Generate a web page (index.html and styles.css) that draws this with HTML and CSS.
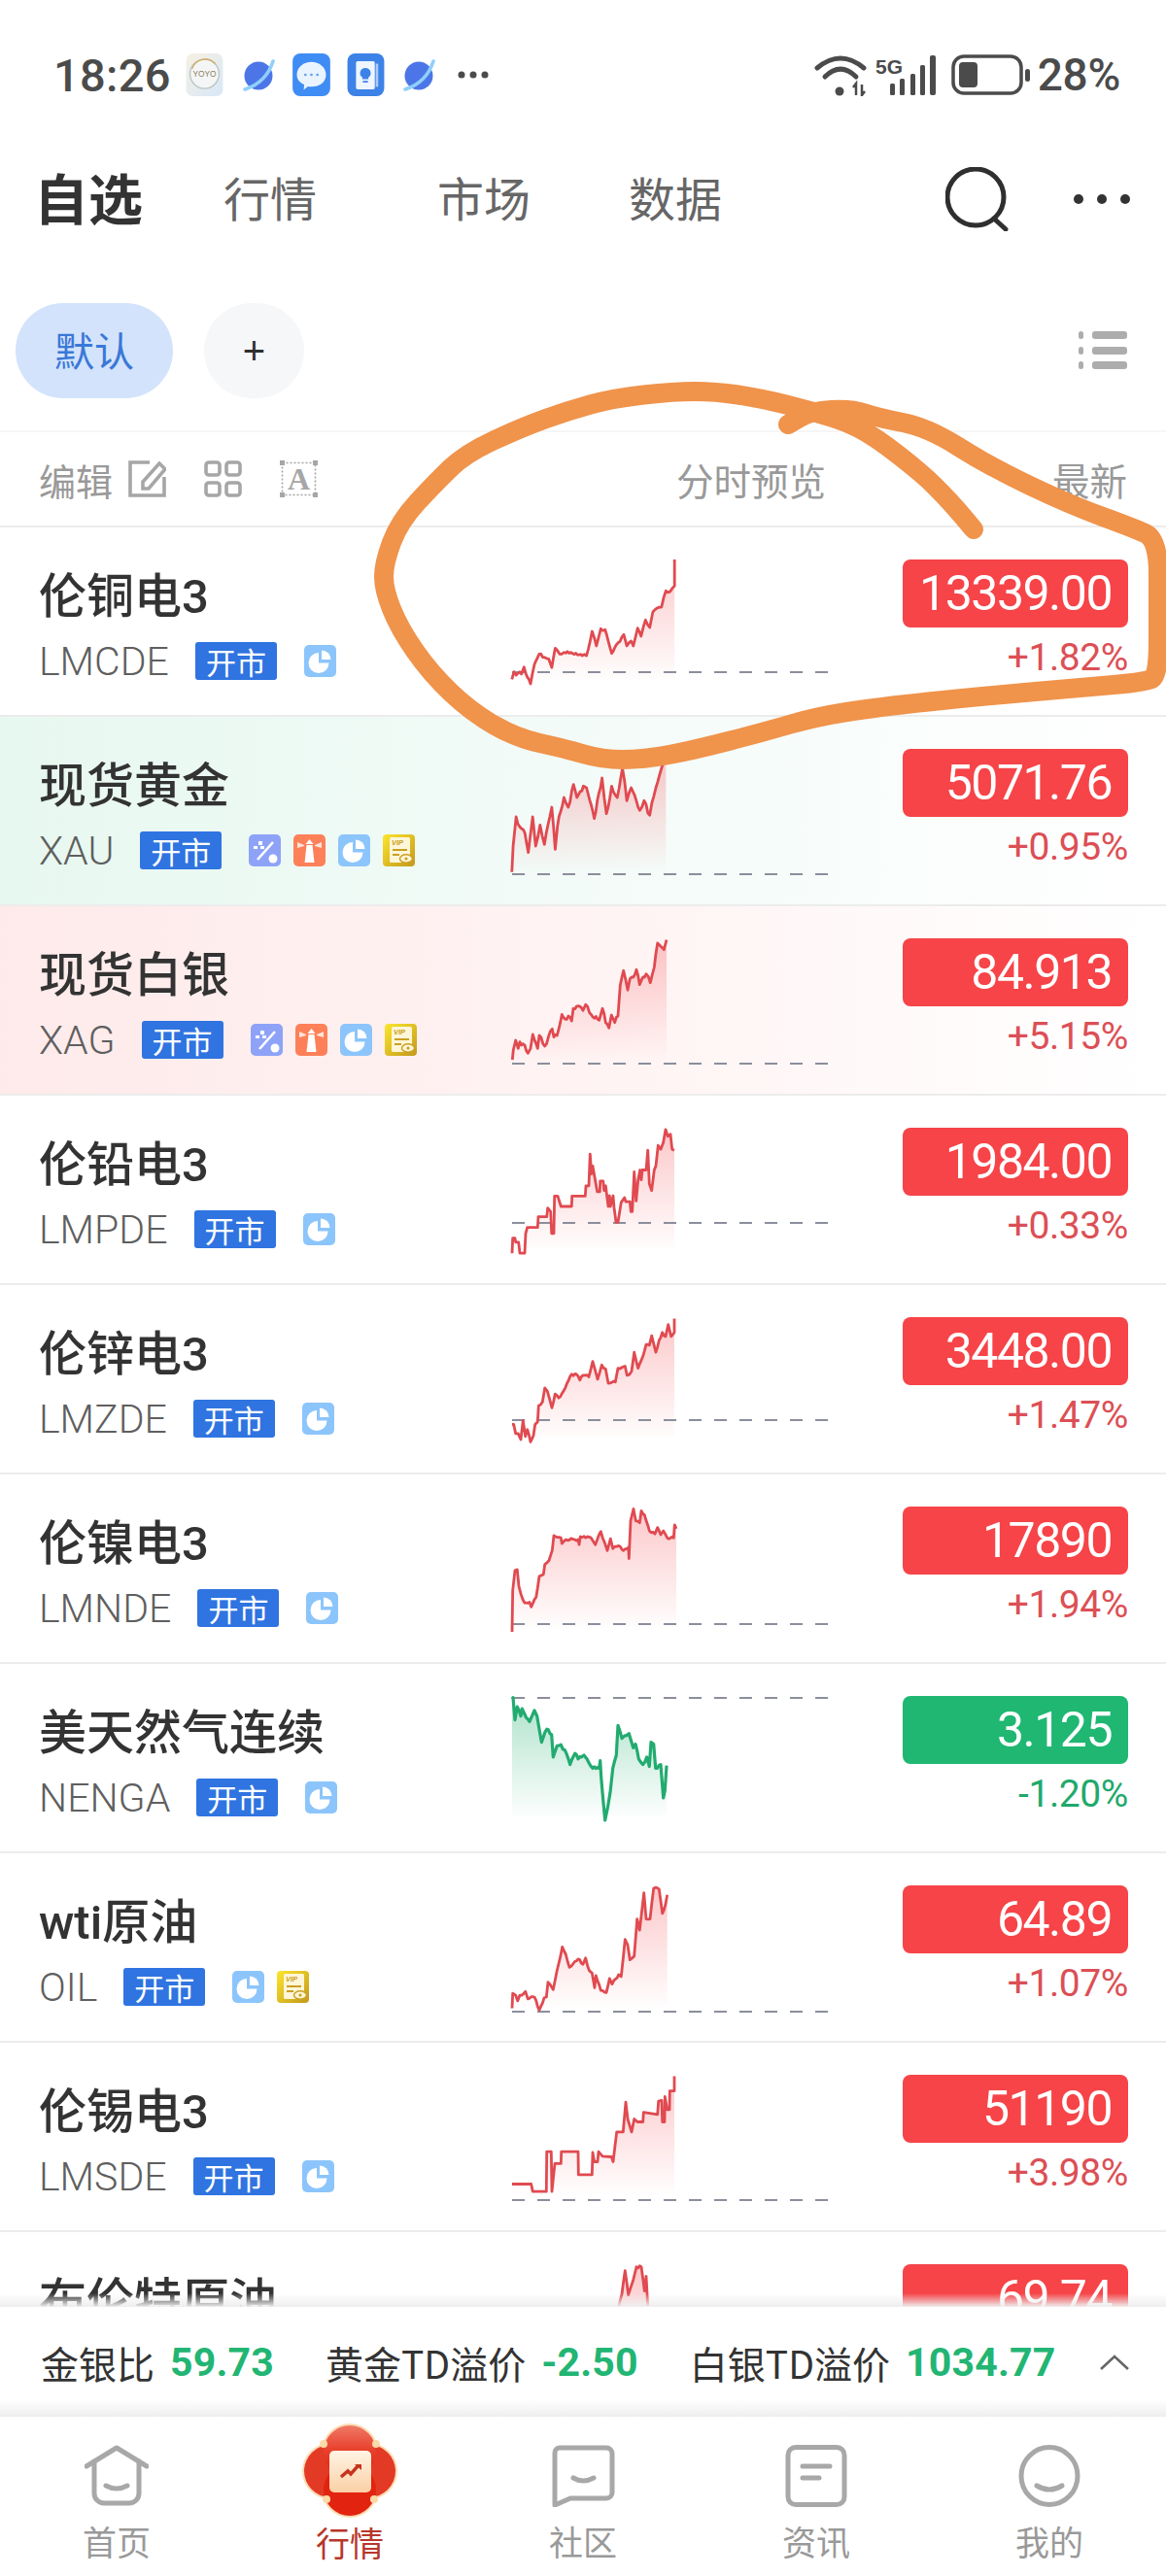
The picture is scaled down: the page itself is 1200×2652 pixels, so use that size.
FILE: index.html
```html
<!DOCTYPE html>
<html lang="zh-CN">
<head>
<meta charset="utf-8">
<title>自选</title>
<link rel="stylesheet" href="styles.css">
</head>
<body>
<svg class="defs" width="0" height="0" aria-hidden="true">
  <defs>
    <linearGradient id="areaUp" x1="0" y1="0" x2="0" y2="1"><stop offset="0" stop-color="#f4474c" stop-opacity=".3"/><stop offset="1" stop-color="#f4474c" stop-opacity="0"/></linearGradient>
    <linearGradient id="areaDown" x1="0" y1="0" x2="0" y2="1"><stop offset="0" stop-color="#1fae6e" stop-opacity=".36"/><stop offset="1" stop-color="#1fae6e" stop-opacity="0"/></linearGradient>
    <linearGradient id="vipGold" x1="0" y1="0" x2="1" y2="1"><stop offset="0" stop-color="#fbe62c"/><stop offset="1" stop-color="#c4981c"/></linearGradient>
    <linearGradient id="cardCream" x1="0" y1="0" x2="0" y2="1"><stop offset="0" stop-color="#fff4e4"/><stop offset="1" stop-color="#fbd0a6"/></linearGradient>
    <linearGradient id="lobeRed" x1="0" y1="0" x2="0" y2="1"><stop offset="0" stop-color="#ef7a66"/><stop offset=".45" stop-color="#e8422e"/><stop offset="1" stop-color="#e0200c"/></linearGradient>
    <linearGradient id="yoyoBg" x1="0" y1="0" x2="1" y2="1"><stop offset="0" stop-color="#f7f0e2"/><stop offset="1" stop-color="#d7e8f8"/></linearGradient>
    <symbol id="iPie" viewBox="0 0 33 33"><rect width="33" height="33" rx="5" fill="#8cc5fb"/><path d="M15 8a10.500 10.500 0 1 0 10.500 10.500H15Z" fill="#fff"/><path d="M18 5.500a9.500 9.500 0 0 1 9.500 9.500H18Z" fill="#fff"/></symbol>
    <symbol id="iPct" viewBox="0 0 33 33"><rect width="33" height="33" rx="5" fill="#8ea3f8"/><path d="M9 26 25 8" stroke="#fff" stroke-width="2.600" fill="none"/><circle cx="25" cy="25" r="4.500" fill="#fff"/><path d="M10 7h4v4h-4ZM5 12h4v3H5ZM12 12h4v3h-4Z" fill="#fff"/></symbol>
    <symbol id="iTower" viewBox="0 0 33 33"><rect width="33" height="33" rx="5" fill="#fd8059"/><path d="M16.500 5l4 5h-8ZM13.500 11h6l2 18h-10Z" fill="#fff"/><path d="M4 8l7 3v1l-7 2ZM29 8l-7 3v1l7 2Z" fill="#ffe3d8"/></symbol>
    <symbol id="iVip" viewBox="0 0 33 33"><rect width="33" height="33" rx="4" fill="url(#vipGold)"/><rect x="7" y="3" width="21" height="26" rx="1.500" fill="#fff6d8"/><text x="9" y="11" class="vip-text">VIP</text><path d="M10 16h15M10 21h7" stroke="#c9a021" stroke-width="1.800"/><ellipse cx="24" cy="25" rx="6.500" ry="4.200" fill="#fff6d8" stroke="#c9a021" stroke-width="1.500"/><circle cx="24" cy="25" r="1.600" fill="#c9a021"/></symbol>
    <symbol id="iPlanet" viewBox="0 0 33 33"><circle cx="16" cy="17" r="14.500" fill="#4c76e8"/><path d="M2 31Q24 24 31 2" fill="none" stroke="#8fd0fb" stroke-width="3.600" stroke-linecap="round"/></symbol>
  </defs>
</svg>

<header class="status">
  <span class="status-time">18:26</span>
  <span class="app-icons">
    <svg class="app yoyo" viewBox="0 0 43 50"><rect width="43" height="50" rx="8" fill="url(#yoyoBg)"/><circle cx="21.500" cy="24" r="17" fill="#f4f6f5" stroke="#b9c4c6" stroke-width="1.500"/><path d="M7 18A16 16 0 0 1 34 12" stroke="#d2ab63" stroke-width="1.500" fill="none"/><text x="21.500" y="27" class="yoyo-text">YOYO</text></svg>
    <svg class="planet" viewBox="0 0 33 33"><use href="#iPlanet"/></svg>
    <svg class="app chat" viewBox="0 0 44 50"><rect width="44" height="50" rx="9" fill="#3f8cf5"/><path d="M22 10c9 0 17 6 17 15s-8 14-17 14c-1 0-3 0-4-.500l-5 4 .500-6C8 34 5 30 5 25c0-9 8-15 17-15Z" fill="#eaf4ff"/><circle cx="15" cy="25" r="1.500" fill="#5b9df2"/><circle cx="22" cy="25" r="1.500" fill="#5b9df2"/><circle cx="29" cy="25" r="1.500" fill="#5b9df2"/></svg>
    <svg class="app note" viewBox="0 0 43 50"><rect width="43" height="50" rx="9" fill="#3d82e6"/><rect x="10" y="9" width="22" height="33" rx="2" fill="#eef5ff"/><rect x="33" y="12" width="3" height="27" fill="#a9ccf6"/><path d="M21 17a6 6 0 0 1 3.500 11v2h-7v-2A6 6 0 0 1 21 17ZM18 32h6v2h-6Z" fill="#3d82e6"/></svg>
    <svg class="planet" viewBox="0 0 33 33"><use href="#iPlanet"/></svg>
    <svg class="more-small" viewBox="0 0 32 8"><circle cx="4" cy="4" r="3.500"/><circle cx="16" cy="4" r="3.500"/><circle cx="28" cy="4" r="3.500"/></svg>
  </span>
  <span class="status-right">
    <svg class="wifi" viewBox="0 0 54 44"><path d="M3 15Q27-5 51 15" /><path d="M11 24Q27 8 43 24"/><circle cx="26" cy="39" r="4.500"/><path d="M43 43V31l-3 4M49 32v11l3-4" class="thin"/></svg>
    <svg class="signal" viewBox="0 0 65 42"><text x="1" y="20" textLength="28" lengthAdjust="spacingAndGlyphs" class="signal-text">5G</text><rect x="16" y="30" width="5" height="12" rx="1.500"/><rect x="26" y="25" width="5" height="17" rx="1.500"/><rect x="37" y="20" width="5" height="22" rx="1.500"/><rect x="47" y="11" width="5" height="31" rx="1.500"/><rect x="57" y="1" width="6" height="41" rx="2"/></svg>
    <svg class="battery" viewBox="0 0 81 42"><rect x="2" y="2" width="70" height="38" rx="11" class="batt-shell"/><rect x="8" y="8" width="19" height="26" rx="4"/><rect x="76" y="15" width="5" height="13" rx="2.500"/></svg>
    <span class="status-pct">28%</span>
  </span>
</header>

<nav class="nav">
  <a class="nav-tab nav-active">自选</a>
  <a class="nav-tab nav-market">行情</a>
  <a class="nav-tab nav-place">市场</a>
  <a class="nav-tab nav-data">数据</a>
  <span class="nav-actions">
    <svg class="search" viewBox="0 0 66 66"><circle cx="31" cy="31" r="29"/><path d="M50 53l12 11"/></svg>
    <svg class="more" viewBox="0 0 58 12"><circle cx="5" cy="6" r="5"/><circle cx="29" cy="6" r="5"/><circle cx="53" cy="6" r="5"/></svg>
  </span>
</nav>

<section class="groups">
  <button class="pill pill-on">默认</button>
  <button class="pill pill-add">+</button>
  <svg class="list-icon" viewBox="0 0 50 40"><rect x="0" y="1" width="5" height="8" rx="2.500"/><rect x="14" y="1" width="36" height="8" rx="3"/><rect x="0" y="17" width="5" height="8" rx="2.500"/><rect x="14" y="17" width="36" height="8" rx="3"/><rect x="0" y="32" width="5" height="8" rx="2.500"/><rect x="14" y="32" width="36" height="8" rx="3"/></svg>
</section>

<section class="toolbar">
  <div class="tool-left">
    <span>编辑</span>
    <svg class="tool-icon edit" viewBox="0 0 39 38"><path d="M22 2H2v34h35V17"/><path d="M15 29v-7L32 3l6 6-17 20Z"/></svg>
    <svg class="tool-icon" viewBox="0 0 39 38"><rect x="2" y="2" width="14" height="13" rx="3"/><rect x="23" y="2" width="14" height="13" rx="3"/><rect x="2" y="23" width="14" height="13" rx="3"/><rect x="23" y="23" width="14" height="13" rx="3"/></svg>
    <svg class="tool-icon font-box" viewBox="0 0 39 38"><rect x="2.500" y="2.500" width="34" height="33" class="dots"/><path d="M0 0h5v5H0ZM34 0h5v5h-5ZM0 33h5v5H0ZM34 33h5v5h-5Z" class="solid"/><text x="19.500" y="30" class="font-a">A</text></svg>
  </div>
  <span class="tool-mid">分时预览</span>
  <span class="tool-right">最新</span>
</section>

<main class="list">
  <article class="row">
    <div class="info"><h3 class="name">伦铜电3</h3><div class="meta"><span class="code">LMCDE</span><span class="badge">开市</span><svg class="tag"><use href="#iPie"/></svg></div></div>
    <svg class="spark" viewBox="0 0 325 195" data-chart="cu"></svg>
    <div class="quote"><div class="price">13339.00</div><div class="pct">+1.82%</div></div>
  </article>
  <article class="row row-green">
    <div class="info"><h3 class="name">现货黄金</h3><div class="meta"><span class="code">XAU</span><span class="badge">开市</span><svg class="tag"><use href="#iPct"/></svg><svg class="tag"><use href="#iTower"/></svg><svg class="tag"><use href="#iPie"/></svg><svg class="tag"><use href="#iVip"/></svg></div></div>
    <svg class="spark" viewBox="0 0 325 195" data-chart="au"></svg>
    <div class="quote"><div class="price">5071.76</div><div class="pct">+0.95%</div></div>
  </article>
  <article class="row row-red">
    <div class="info"><h3 class="name">现货白银</h3><div class="meta"><span class="code">XAG</span><span class="badge">开市</span><svg class="tag"><use href="#iPct"/></svg><svg class="tag"><use href="#iTower"/></svg><svg class="tag"><use href="#iPie"/></svg><svg class="tag"><use href="#iVip"/></svg></div></div>
    <svg class="spark" viewBox="0 0 325 195" data-chart="ag"></svg>
    <div class="quote"><div class="price">84.913</div><div class="pct">+5.15%</div></div>
  </article>
  <article class="row">
    <div class="info"><h3 class="name">伦铅电3</h3><div class="meta"><span class="code">LMPDE</span><span class="badge">开市</span><svg class="tag"><use href="#iPie"/></svg></div></div>
    <svg class="spark" viewBox="0 0 325 195" data-chart="pb"></svg>
    <div class="quote"><div class="price">1984.00</div><div class="pct">+0.33%</div></div>
  </article>
  <article class="row">
    <div class="info"><h3 class="name">伦锌电3</h3><div class="meta"><span class="code">LMZDE</span><span class="badge">开市</span><svg class="tag"><use href="#iPie"/></svg></div></div>
    <svg class="spark" viewBox="0 0 325 195" data-chart="zn"></svg>
    <div class="quote"><div class="price">3448.00</div><div class="pct">+1.47%</div></div>
  </article>
  <article class="row">
    <div class="info"><h3 class="name">伦镍电3</h3><div class="meta"><span class="code">LMNDE</span><span class="badge">开市</span><svg class="tag"><use href="#iPie"/></svg></div></div>
    <svg class="spark" viewBox="0 0 325 195" data-chart="ni"></svg>
    <div class="quote"><div class="price">17890</div><div class="pct">+1.94%</div></div>
  </article>
  <article class="row">
    <div class="info"><h3 class="name">美天然气连续</h3><div class="meta"><span class="code">NENGA</span><span class="badge">开市</span><svg class="tag"><use href="#iPie"/></svg></div></div>
    <svg class="spark" viewBox="0 0 325 195" data-chart="gas"></svg>
    <div class="quote"><div class="price price-down">3.125</div><div class="pct pct-down">-1.20%</div></div>
  </article>
  <article class="row">
    <div class="info"><h3 class="name">wti原油</h3><div class="meta"><span class="code">OIL</span><span class="badge">开市</span><svg class="tag"><use href="#iPie"/></svg><svg class="tag"><use href="#iVip"/></svg></div></div>
    <svg class="spark" viewBox="0 0 325 195" data-chart="oil"></svg>
    <div class="quote"><div class="price">64.89</div><div class="pct">+1.07%</div></div>
  </article>
  <article class="row">
    <div class="info"><h3 class="name">伦锡电3</h3><div class="meta"><span class="code">LMSDE</span><span class="badge">开市</span><svg class="tag"><use href="#iPie"/></svg></div></div>
    <svg class="spark" viewBox="0 0 325 195" data-chart="sn"></svg>
    <div class="quote"><div class="price">51190</div><div class="pct">+3.98%</div></div>
  </article>
  <article class="row">
    <div class="info"><h3 class="name">布伦特原油</h3></div>
    <svg class="spark" viewBox="0 0 325 195" data-chart="brent"></svg>
    <div class="quote"><div class="price">69.74</div></div>
  </article>
</main>

<section class="stats">
  <div class="stat"><span>金银比</span><b>59.73</b></div>
  <div class="stat"><span>黄金TD溢价</span><b>-2.50</b></div>
  <div class="stat"><span>白银TD溢价</span><b>1034.77</b></div>
  <svg class="caret" viewBox="0 0 30 16"><path d="M1 15 15 2l14 13"/></svg>
</section>

<footer class="tabbar">
  <a class="tab">
    <svg class="tab-icon" viewBox="0 0 66 64"><path d="M2 22 33 3l31 19"/><path d="M10 17v33a10 10 0 0 0 10 10h26a10 10 0 0 0 10-10V17"/><path d="M22 42q11 6 22 0"/></svg>
    <span>首页</span>
  </a>
  <a class="tab tab-on">
    <svg class="festive" viewBox="0 0 96 96">
      <circle cx="48" cy="28" r="29" fill="#fcdcb4"/><circle cx="28" cy="48" r="29" fill="#fcdcb4"/><circle cx="68" cy="48" r="29" fill="#fcdcb4"/><circle cx="48" cy="67" r="29" fill="#fcdcb4"/>
      <circle cx="28" cy="48" r="27" fill="#e33a26"/><circle cx="68" cy="48" r="27" fill="#e33a26"/><circle cx="48" cy="28" r="27" fill="url(#lobeRed)"/><circle cx="48" cy="67" r="27" fill="#e2230f"/>
      <circle cx="21" cy="20" r="4" fill="#fbd9a8"/><circle cx="75" cy="20" r="4" fill="#fbd9a8"/><circle cx="24" cy="77" r="4" fill="#fbd9a8"/><circle cx="73" cy="77" r="4" fill="#fbd9a8"/>
      <rect x="27" y="27" width="43" height="43" rx="5" fill="url(#cardCream)"/>
      <path d="M39 54l7-6 3 3 8-9" fill="none" stroke="#c8321f" stroke-width="3.500"/><path d="M53 41h7v6Z" fill="#c8321f"/>
    </svg>
    <span>行情</span>
  </a>
  <a class="tab">
    <svg class="tab-icon" viewBox="0 0 66 64"><path d="M9 3h48a6 6 0 0 1 6 6v40a6 6 0 0 1-6 6H20L4 62V8a5 5 0 0 1 5-5Z"/><path d="M23 34q10 6 21 0"/></svg>
    <span>社区</span>
  </a>
  <a class="tab">
    <svg class="tab-icon" viewBox="0 0 66 64"><rect x="4" y="2.500" width="58" height="59" rx="8"/><path d="M19 22h28M19 34h17"/></svg>
    <span>资讯</span>
  </a>
  <a class="tab">
    <svg class="tab-icon" viewBox="0 0 66 64"><ellipse cx="33" cy="32" rx="29" ry="29.500"/><path d="M20 42q13 8 26 0"/></svg>
    <span>我的</span>
  </a>
</footer>

<svg class="scribble" viewBox="0 0 1200 2652" aria-hidden="true"><path id="scribblePath"/></svg>
<script src="chart.js"></script>
</body>
</html>
```
FILE: styles.css
```css
* { box-sizing: border-box; margin: 0; padding: 0; }
html, body { width: 1200px; height: 2652px; overflow: hidden; background: #fff; }
body {
  position: relative;
  display: flex;
  flex-direction: column;
  font-family: Roboto, "Noto Sans CJK SC", sans-serif;
  color: #333;
}
.defs { position: absolute; }
.vip-text { font: italic 700 7.5px "Liberation Sans", sans-serif; fill: #c9a021; }
.yoyo-text { font: 400 9.5px "Liberation Sans", sans-serif; fill: #8a7f5f; text-anchor: middle; }

/* status bar */
.status { height: 154px; flex: none; display: flex; align-items: center; padding: 0 47px 0 55px; color: #4b4b4b; }
.status-time { font-size: 47px; font-weight: 500; letter-spacing: .3px; width: 134px; line-height: 1; }
.app-icons { display: flex; align-items: center; }
.app { width: 43px; height: 44px; }
.yoyo { margin-right: 18px; }
.planet { width: 33px; height: 33px; margin-right: 16px; }
.chat { margin-right: 13px; }
.note { margin-right: 17px; }
.more-small { width: 32px; height: 8px; margin-left: 7px; fill: #4b4b4b; }
.status-right { margin-left: auto; display: flex; align-items: center; }
.wifi { width: 54px; height: 44px; margin-right: 8px; }
.wifi path { fill: none; stroke: #4b4b4b; stroke-width: 5; stroke-linecap: round; }
.wifi path.thin { stroke-width: 2.5; stroke-linecap: butt; }
.wifi circle { fill: #4b4b4b; }
.signal { width: 65px; height: 42px; margin-right: 14px; fill: #4b4b4b; }
.signal-text { font: 700 21px "Liberation Sans", sans-serif; }
.battery { width: 81px; height: 42px; margin-right: 8px; fill: #4b4b4b; }
.batt-shell { fill: none; stroke: #4b4b4b; stroke-width: 3.5; }
.status-pct { font-size: 46px; font-weight: 500; line-height: 1; letter-spacing: -.3px; }

/* top navigation */
.nav { height: 102px; flex: none; display: flex; align-items: center; padding-left: 35px; }
.nav-tab { font-family: "Noto Sans CJK SC", sans-serif; font-size: 48px; line-height: 1; color: #666; margin-bottom: 6px; }
.nav-active { font-size: 56px; font-weight: 700; color: #333; }
.nav-market { margin-left: 83px; }
.nav-place { margin-left: 124px; }
.nav-data { margin-left: 101px; }
.nav-actions { margin-left: auto; display: flex; align-items: center; padding-right: 37px; }
.search { width: 66px; height: 66px; margin-right: 66px; }
.search circle, .search path { fill: none; stroke: #2f2f2f; stroke-width: 5; stroke-linecap: round; }
.more { width: 58px; height: 12px; fill: #333; }

/* group pills */
.groups { height: 187px; flex: none; display: flex; align-items: flex-start; padding: 56px 40px 0 16px; }
.pill { height: 98px; border: 0; border-radius: 49px; font-family: "Noto Sans CJK SC", sans-serif; }
.pill-on { width: 162px; background: #d3e3fb; color: #3a78d8; font-size: 41px; padding-bottom: 4px; }
.pill-add { width: 103px; margin-left: 32px; background: #f6f7f9; color: #2f2f2f; font-size: 40px; font-family: "Liberation Sans", sans-serif; }
.list-icon { width: 50px; height: 40px; margin: 28px 0 0 auto; fill: #adadad; }

/* list toolbar */
.toolbar { height: 100px; flex: none; display: flex; align-items: center; padding: 0 40px 0 40px; border-top: 2px solid #f6f6f6; border-bottom: 2px solid #ececec; color: #999; font-family: "Noto Sans CJK SC", sans-serif; font-size: 38.5px; }
.tool-left { display: flex; align-items: center; width: 656px; font-size: 38px; }
.tool-icon { width: 39px; height: 38px; margin-left: 39px; }
.tool-icon.edit { margin-left: 16px; }
.tool-icon rect, .tool-icon path { fill: none; stroke: #a6a6a6; stroke-width: 3.6; }
.tool-icon .dots { stroke-width: 1.6; stroke-dasharray: 2 2; }
.tool-icon .solid { fill: #a6a6a6; stroke: none; }
.font-a { font: 700 32px "Liberation Serif", serif; fill: #a6a6a6; text-anchor: middle; }
.tool-right { margin-left: auto; }

/* quote rows */
.list { flex: 1; min-height: 0; overflow: hidden; }
.row { height: 195px; display: grid; grid-template-columns: 487px 325px 1fr; padding-left: 40px; border-bottom: 2px solid #ececec; background: #fff; }
.row-green { background: linear-gradient(90deg, #e7f8f0 0%, #f3fbf8 50%, #fff 100%); }
.row-red { background: linear-gradient(90deg, #feeaea 0%, #fff3f3 50%, #fff 100%); }
.info { padding-top: 44px; }
.name { font-family: Roboto, "Noto Sans CJK SC", sans-serif; font-size: 49px; font-weight: 500; line-height: 56px; color: #333; }
.meta { display: flex; align-items: center; height: 40px; margin-top: 17px; }
.code { font-size: 41px; font-weight: 300; line-height: 40px; color: #5f5f5f; margin-right: 27px; margin-top: 2px; }
.badge { width: 84px; height: 39px; background: #2f74e0; border-radius: 3px; color: #fff; font-family: "Noto Sans CJK SC", sans-serif; font-size: 31px; line-height: 39px; text-align: center; margin-right: 15px; }
.tag { width: 33px; height: 33px; margin-left: 13px; }
.spark { width: 325px; height: 195px; overflow: visible; }
.spark-line { fill: none; stroke: #e04a50; stroke-width: 2.8; stroke-linejoin: round; }
.spark-line.down { stroke: #22ab70; stroke-width: 3.2; }
.spark-area { fill: url(#areaUp); }
.spark-area.down { fill: url(#areaDown); }
.spark-base { stroke: #8b8e9c; stroke-width: 2; stroke-dasharray: 13 13; }
.quote { padding: 33px 39px 0 0; text-align: right; }
.price { width: 232px; height: 70px; margin-left: auto; background: #f64448; border-radius: 8px; color: #fff; font-size: 50px; line-height: 70px; letter-spacing: -1.5px; padding-right: 17px; }
.price-down { background: #1fb772; }
.pct { margin-top: 9px; font-size: 39px; line-height: 44px; color: #dc4f55; letter-spacing: -.4px; }
.pct-down { color: #1fa96c; }

/* stats strip */
.stats { position: relative; height: 113px; flex: none; display: flex; align-items: center; padding: 0 38px 0 42px; background: linear-gradient(180deg, #fff 84%, #eee 100%); font-family: "Noto Sans CJK SC", sans-serif; font-size: 39px; color: #333; }
.stats::before { content: ""; position: absolute; left: 0; right: 0; top: -14px; height: 14px; background: linear-gradient(180deg, rgba(238,238,238,0), #eee); }
.stat { display: flex; align-items: center; gap: 16px; margin-right: 53px; white-space: nowrap; }
.stat:last-of-type { margin-right: 0; }
.stat b { font-family: Roboto, sans-serif; font-weight: 700; font-size: 41px; letter-spacing: .2px; color: #22b573; }
.caret { width: 30px; height: 16px; flex: none; margin-left: auto; }
.caret path { fill: none; stroke: #666; stroke-width: 2.6; }

/* bottom tabs */
.tabbar { height: 164px; flex: none; display: grid; grid-template-columns: repeat(5, 240px); background: #fff; }
.tab { display: flex; flex-direction: column; align-items: center; font-family: "Noto Sans CJK SC", sans-serif; font-size: 35px; line-height: 40px; color: #999; padding-top: 29px; }
.tab span { margin-top: 15px; }
.tab-icon { width: 66px; height: 64px; }
.tab-icon path, .tab-icon rect, .tab-icon ellipse { fill: none; stroke: #a8a8a8; stroke-width: 5; stroke-linecap: round; stroke-linejoin: round; }
.tab-on { color: #b8362a; padding-top: 8px; }
.tab-on span { margin-top: 5px; }
.festive { width: 96px; height: 96px; overflow: visible; }

/* hand-drawn annotation over the screenshot */
.scribble { position: absolute; left: 0; top: 0; width: 1200px; height: 2652px; pointer-events: none; }
.scribble path { fill: none; stroke: #f0934b; stroke-width: 20; stroke-linecap: round; stroke-linejoin: round; }
```
FILE: chart.js
```js
// Sparkline data, traced in source-space units and mapped into each row's 325x195 box.
var rowTop = { cu: 543, au: 737, ag: 932, pb: 1127, zn: 1322, ni: 1517, gas: 1712, oil: 1907, sn: 2103, brent: 2297 };
var spaces = {
  a: function (x, y, t) { return [x / 2.24 - 27, y / 3 + 540 - t]; },
  b: function (x, y, t) { return [x / 3 - 17, y / 3 + 950 - t]; },
  c: function (x, y, t) { return [(x - 81) / 3, y / 2.45 + 1130 - t]; },
  d: function (x, y, t) { return [(x - 81) / 3, y / 2.61 + 1760 - t]; }
};
var charts = {
  cu: { s: 'a', base: 149, j: 1, p: [60,478,65,455,70,465,78,455,82,462,88,440,92,460,103,492,112,432,123,400,135,410,145,415,152,442,160,382,170,400,180,395,200,398,222,405,232,405,245,330,255,375,265,322,275,325,290,398,305,365,318,340,325,375,335,360,340,375,350,320,358,345,368,295,378,318,385,270,395,258,405,255,415,205,425,207,435,190,435,108] },
  au: { s: 'a', base: 162, j: 2, p: [60,1070,63,990,70,900,78,930,90,950,98,1010,108,900,115,990,125,925,135,985,152,870,160,1000,165,930,180,840,190,870,202,800,210,840,225,805,232,810,250,905,268,780,278,890,290,805,303,840,315,750,325,850,335,810,355,880,365,850,378,895,392,810,405,750,415,720] },
  ag: { s: 'b', base: 162, j: 1.5, p: [52,420,55,390,62,360,70,385,75,365,90,375,100,400,108,385,115,342,130,385,135,345,152,378,175,325,180,350,190,345,205,280,215,295,225,285,235,300,240,262,250,255,270,268,278,250,290,275,315,295,320,298,330,262,340,305,350,322,358,282,368,305,378,285,385,190,395,145,408,205,415,170,425,165,435,142,445,188,465,155,478,182,490,135,500,60,510,70,520,80,528,50] },
  pb: { s: 'c', base: 131, j: 0, p: [81,390,83,352,90,352,92,362,101,362,105,390,120,390,123,340,128,325,160,325,162,298,188,298,191,276,200,285,203,340,210,340,212,246,222,246,232,272,265,272,266,246,307,246,309,220,318,220,322,140,326,190,330,170,344,235,352,235,353,208,362,208,365,232,370,220,378,272,382,245,385,272,393,245,396,275,402,312,408,312,418,262,428,250,432,260,445,260,448,285,452,285,458,185,464,258,470,205,476,180,480,205,483,180,495,180,500,130,505,215,512,232,520,180,525,170,532,118,540,128,548,110,555,78,562,95,570,90,575,128,582,130] },
  zn: { s: 'c', base: 139, j: 1, p: [81,822,86,822,92,845,100,845,108,860,115,812,122,852,128,835,138,866,147,850,152,822,160,815,163,775,175,765,182,730,190,738,204,780,214,745,225,755,245,730,265,695,285,700,290,710,300,698,318,702,330,663,345,708,358,672,370,682,378,718,400,715,408,680,430,675,436,698,450,688,458,640,470,680,480,660,495,620,505,622,512,598,525,640,535,610,545,590,555,600,563,570,572,600,582,590,582,555] },
  ni: { s: 'c', base: 154, j: .8, p: [81,1345,83,1240,90,1190,97,1188,102,1230,115,1265,120,1272,135,1270,140,1282,155,1258,165,1205,178,1200,182,1175,195,1165,205,1140,210,1102,232,1108,235,1122,247,1112,285,1112,288,1125,292,1105,325,1108,338,1125,355,1092,367,1120,375,1140,385,1110,392,1135,410,1128,425,1140,440,1132,442,1160,447,1065,456,1035,463,1065,475,1070,480,1040,490,1050,505,1090,522,1098,530,1082,540,1100,548,1090,560,1108,580,1108,583,1075,588,1085] },
  gas: { s: 'd', base: 35, j: 1, down: true, p: [81,-31,84,-35,90,25,97,-10,108,15,112,-5,125,20,135,30,150,0,158,15,165,50,172,85,188,50,203,65,208,125,220,95,232,92,250,118,260,145,275,115,285,130,295,125,303,120,312,130,330,155,350,155,353,135,356,180,362,240,368,295,376,262,384,220,392,155,403,120,408,40,420,75,428,68,442,62,455,100,462,90,472,130,485,145,497,125,505,150,510,85,518,90,524,155,540,145,548,235,553,215,558,148] },
  oil: { s: 'd', base: 163, j: 1, p: [81,800,83,760,92,765,98,780,105,765,122,755,130,775,150,770,165,805,180,772,187,770,192,730,208,750,225,680,236,635,247,655,258,690,270,680,285,668,300,682,308,665,320,700,328,705,336,745,340,712,355,752,372,758,382,720,390,735,410,710,418,715,430,615,438,630,445,670,458,660,467,560,475,590,488,490,495,560,507,560,518,478,535,480,545,545,555,520,560,495] },
  sn: { s: 'd', base: 162, j: 0, p: [81,1275,140,1275,145,1295,187,1295,188,1188,202,1188,204,1295,213,1220,232,1220,233,1188,285,1188,286,1250,328,1250,330,1190,335,1215,345,1215,348,1188,360,1200,388,1202,393,1215,404,1135,424,1135,432,1055,438,1100,450,1135,458,1100,468,1108,485,1108,487,1082,530,1088,533,1052,543,1050,545,1108,552,1108,553,1040,560,1075,567,1075,568,1025,582,1025,582,985] },
  brent: { s: 'd', base: 163, j: .8, p: [81,1720,300,1700,400,1640,420,1568,430,1505,440,1570,455,1530,465,1495,480,1495,490,1560,495,1520,500,1600] }
};

// small repeatable noise so traced lines keep the tick-by-tick texture
var seed = 7;
function noise() { seed = (seed * 9301 + 49297) % 233280; return seed / 233280 - .5; }

function trace(def, top) {
  var map = spaces[def.s], out = [];
  for (var i = 0; i < def.p.length; i += 2) {
    var q = map(def.p[i], def.p[i + 1], top);
    if (out.length && def.j) {
      var prev = out[out.length - 1], steps = Math.floor(Math.abs(q[0] - prev[0]) / 1.6);
      for (var k = 1; k < steps; k++) {
        var f = k / steps;
        out.push([prev[0] + (q[0] - prev[0]) * f, prev[1] + (q[1] - prev[1]) * f + noise() * def.j * 3]);
      }
    }
    out.push(q);
  }
  return out;
}

function toPath(points) {
  return points.map(function (q, i) { return (i ? 'L' : 'M') + q[0].toFixed(1) + ' ' + q[1].toFixed(1); }).join('');
}

var NS = 'http://www.w3.org/2000/svg';
function add(parent, tag, attrs) {
  var el = document.createElementNS(NS, tag);
  Object.keys(attrs).forEach(function (name) { el.setAttribute(name, attrs[name]); });
  parent.appendChild(el);
}

document.querySelectorAll('.spark').forEach(function (svg) {
  var key = svg.getAttribute('data-chart'), def = charts[key], pts = trace(def, rowTop[key]);
  var line = toPath(pts), tone = def.down ? ' down' : '';
  var first = pts[0], last = pts[pts.length - 1], floor = 158;
  add(svg, 'path', { 'class': 'spark-area' + tone, d: line + 'L' + last[0].toFixed(1) + ' ' + floor + 'L' + first[0].toFixed(1) + ' ' + floor + 'Z' });
  add(svg, 'line', { 'class': 'spark-base', x1: 0, x2: 325, y1: def.base, y2: def.base });
  add(svg, 'path', { 'class': 'spark-line' + tone, d: line });
});

// hand-drawn circle: smooth the traced stroke through segment midpoints
var stroke = [1002,545,971,507,924,467,882,438,835,423,783,410,736,403,694,403,631,410,584,423,537,440,479,467,448,497,411,537,395,580,395,607,411,647,443,693,485,733,532,760,579,770,620,782,662,782,715,772,788,753,840,738,903,728,1008,717,1112,708,1180,702,1192,695,1192,625,1192,555,1165,543,1102,520,1018,480,955,440,903,430,877,421,835,423,811,437];
var d = 'M' + stroke[0] + ' ' + stroke[1];
for (var i = 2; i < stroke.length - 2; i += 2) {
  d += 'Q' + stroke[i] + ' ' + stroke[i + 1] + ' ' + (stroke[i] + stroke[i + 2]) / 2 + ' ' + (stroke[i + 1] + stroke[i + 3]) / 2;
}
d += 'L' + stroke[stroke.length - 2] + ' ' + stroke[stroke.length - 1];
document.getElementById('scribblePath').setAttribute('d', d);
```
